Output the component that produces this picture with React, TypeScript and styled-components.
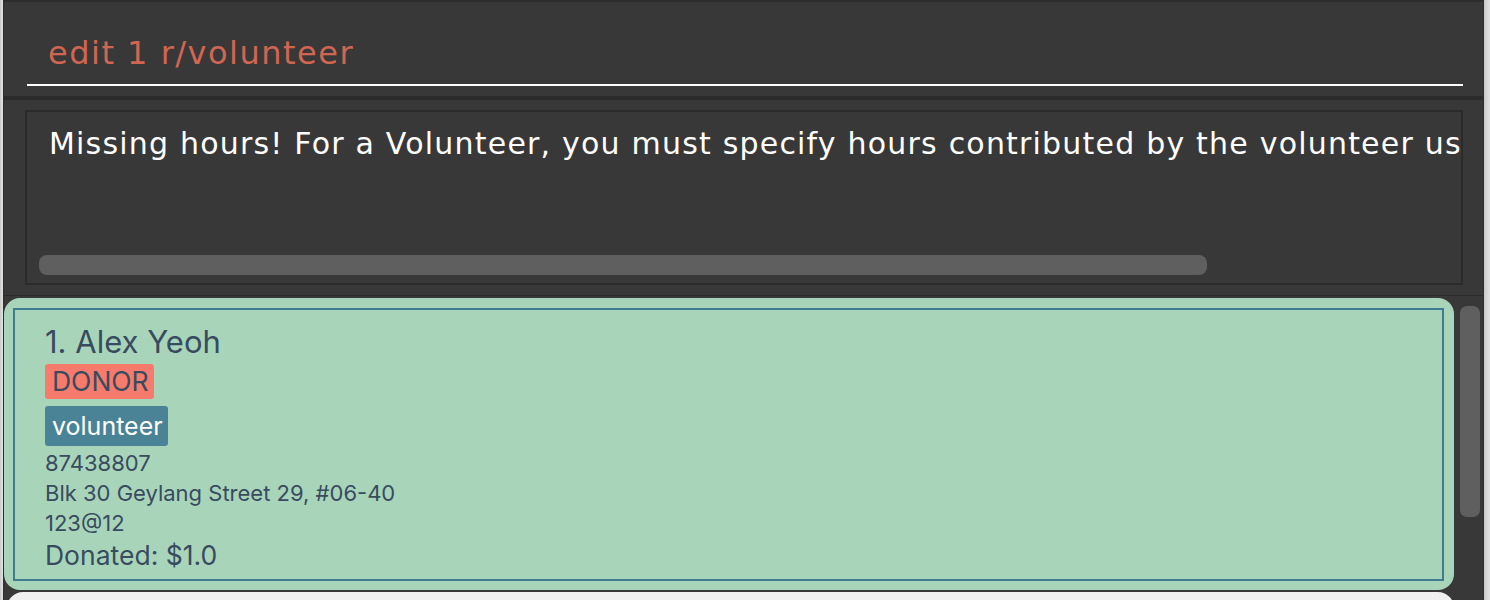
import React from "react";
import styled, { createGlobalStyle } from "styled-components";

const Global = createGlobalStyle`
  html, body { margin: 0; padding: 0; background: #d6d6d6; overflow: hidden; }
  #root { width: 1490px; height: 600px; }
`;

const Screen = styled.div`
  display: flex;
  width: 1490px;
  height: 600px;
  overflow: hidden;
`;

const SideStrip = styled.div<{ $w: number }>`
  width: ${(p) => p.$w}px;
  flex-shrink: 0;
  background: linear-gradient(to right, #c9c9c9, #e4e4e4);
`;

const Window = styled.div`
  flex: 1;
  display: flex;
  flex-direction: column;
  background: #383838;
  border-top: 2px solid #2c2c2c;
  border-left: 1px solid #2c2c2c;
  border-right: 1px solid #2c2c2c;
  min-width: 0;
`;

const CommandPane = styled.div`
  height: 94px;
  box-sizing: border-box;
  padding: 0 20px 10px 23px;
  display: flex;
  flex-direction: column;
  justify-content: flex-end;
`;

const CommandInput = styled.div`
  border-bottom: 2px solid #ffffff;
  padding: 0 0 12px 21px;
  font-family: "DejaVu Sans", Verdana, sans-serif;
  font-size: 32px;
  letter-spacing: 1.5px;
  line-height: 37px;
  color: #d06651;
  white-space: nowrap;
`;

const Divider = styled.div<{ $h: number }>`
  height: ${(p) => p.$h}px;
  background: #2b2b2b;
  flex-shrink: 0;
`;

const ResultPane = styled.div`
  height: 195px;
  box-sizing: border-box;
  padding: 10px 20px 10px 21px;
  display: flex;
`;

const ResultBox = styled.div`
  flex: 1;
  border: 2px solid #2b2b2b;
  display: flex;
  flex-direction: column;
  justify-content: space-between;
  padding: 14px 0 8px 12px;
  min-width: 0;
  overflow: hidden;
`;

const ResultText = styled.div`
  font-family: "DejaVu Sans", Verdana, sans-serif;
  font-size: 30px;
  letter-spacing: 1.2px;
  line-height: 36px;
  color: #ffffff;
  white-space: nowrap;
  padding-left: 10px;
`;

const HScrollThumb = styled.div`
  width: 1168px;
  height: 20px;
  border-radius: 8px;
  background: #5f5f5f;
`;

const ListPane = styled.div`
  flex: 1;
  display: flex;
  min-height: 0;
  padding-top: 2px;
`;

const ListColumn = styled.div`
  flex: 1;
  display: flex;
  flex-direction: column;
  gap: 2px;
  min-width: 0;
`;

const Card = styled.div`
  background: #a8d5ba;
  border-radius: 16px;
  padding: 10px 10px 9px 9px;
  flex-shrink: 0;
`;

const CardInner = styled.div`
  border: 2px solid #3f7b91;
  padding: 12px 30px 7px 30px;
  display: flex;
  flex-direction: column;
  align-items: flex-start;
  color: #384b5f;
  font-family: Inter, "Open Sans", sans-serif;
`;

const Name = styled.div`
  font-size: 31px;
  line-height: 40px;
`;

const Tag = styled.div<{ $bg: string; $fg: string; $h: number; $size: number; $mt: number }>`
  background: ${(p) => p.$bg};
  color: ${(p) => p.$fg};
  height: ${(p) => p.$h}px;
  line-height: ${(p) => p.$h}px;
  font-size: ${(p) => p.$size}px;
  margin-top: ${(p) => p.$mt}px;
  padding: 0 5px 0 7px;
  border-radius: 3px;
`;

const DetailGroup = styled.div`
  margin-top: 2px;
  display: flex;
  flex-direction: column;
`;

const Detail = styled.div<{ $size: number; $lh: number }>`
  font-size: ${(p) => p.$size}px;
  line-height: ${(p) => p.$lh}px;
`;

const EmptyCard = styled.div`
  background: #f0f0f0;
  border-radius: 16px;
  height: 40px;
  flex-shrink: 0;
  margin-left: 3px;
`;

const VScroll = styled.div`
  width: 29px;
  flex-shrink: 0;
  padding: 8px 3px 0 6px;
  box-sizing: border-box;
`;

const VThumb = styled.div`
  height: 211px;
  border-radius: 7px;
  background: #5f5f5f;
`;

export default function App() {
  return (
    <>
      <Global />
      <Screen>
        <SideStrip $w={3} />
        <Window>
          <CommandPane>
            <CommandInput>edit 1 r/volunteer</CommandInput>
          </CommandPane>
          <Divider $h={4} />
          <ResultPane>
            <ResultBox>
              <ResultText>
                Missing hours! For a Volunteer, you must specify hours contributed by the volunteer us
              </ResultText>
              <HScrollThumb />
            </ResultBox>
          </ResultPane>
          <Divider $h={1} />
          <ListPane>
            <ListColumn>
              <Card>
                <CardInner>
                  <Name>1. Alex Yeoh</Name>
                  <Tag $bg="#f77b6c" $fg="#384b5f" $h={35} $size={26.5} $mt={2}>DONOR</Tag>
                  <Tag $bg="#4a8396" $fg="#ffffff" $h={40} $size={25} $mt={7}>volunteer</Tag>
                  <DetailGroup>
                    <Detail $size={22} $lh={30}>87438807</Detail>
                    <Detail $size={22} $lh={30}>Blk 30 Geylang Street 29, #06-40</Detail>
                    <Detail $size={22} $lh={30}>123@12</Detail>
                    <Detail $size={26.5} $lh={34}>Donated: $1.0</Detail>
                  </DetailGroup>
                </CardInner>
              </Card>
              <EmptyCard />
            </ListColumn>
            <VScroll>
              <VThumb />
            </VScroll>
          </ListPane>
        </Window>
        <SideStrip $w={6} />
      </Screen>
    </>
  );
}
